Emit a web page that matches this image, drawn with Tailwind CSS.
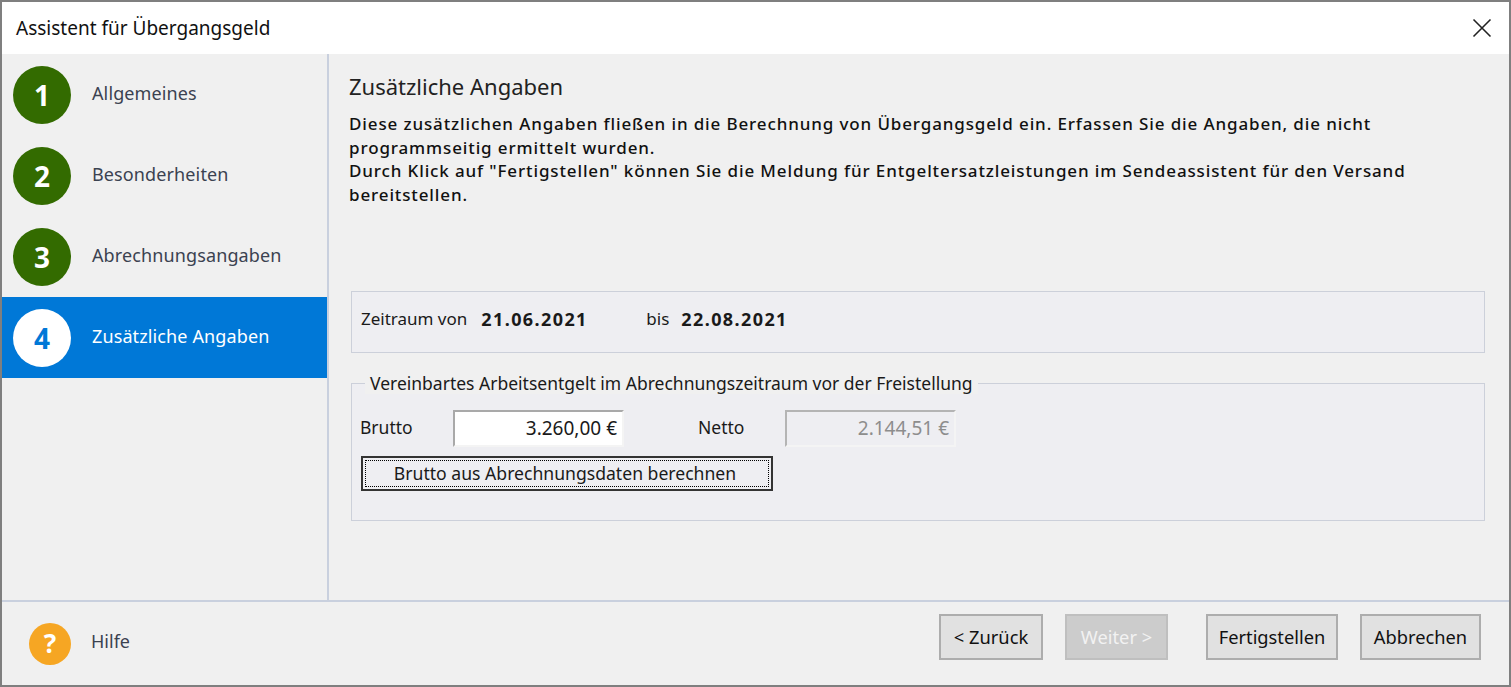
<!DOCTYPE html>
<html lang="de">
<head>
  <meta charset="UTF-8">
  <title>Assistent für Übergangsgeld</title>
  <script src="https://cdn.jsdelivr.net/npm/@tailwindcss/browser@4"></script>
</head>
<body class="bg-[#f0f0f0] overflow-hidden">
  <div class="w-[1511px] h-[687px] flex flex-col border-2 border-[#7f7f7f] bg-[#f0f0f0] font-['Noto_Sans',sans-serif] text-[#1a1a1a]">

    <!-- Title bar -->
    <div class="h-[52px] shrink-0 bg-white flex items-center justify-between pl-[14px] pr-[17px]">
      <span class="text-[19px] text-[#111]">Assistent für Übergangsgeld</span>
      <svg width="20" height="20" viewBox="0 0 20 20" fill="none" stroke="#222" stroke-width="1.6"><path d="M1.5 1.5 18.5 18.5M18.5 1.5 1.5 18.5"/></svg>
    </div>

    <!-- Main -->
    <div class="flex flex-1 min-h-0">
      <!-- Steps -->
      <nav class="w-[325px] shrink-0 text-[#3b4250] text-[18px] tracking-[0.12px]">
        <div class="h-[81px] flex items-center pl-[11px] gap-[21px]">
          <span class="w-[58px] h-[58px] rounded-full bg-[#336b00] text-white flex items-center justify-center text-[28px] font-bold">1</span>
          <span class="mb-[2px]">Allgemeines</span>
        </div>
        <div class="h-[81px] flex items-center pl-[11px] gap-[21px]">
          <span class="w-[58px] h-[58px] rounded-full bg-[#336b00] text-white flex items-center justify-center text-[28px] font-bold">2</span>
          <span class="mb-[2px]">Besonderheiten</span>
        </div>
        <div class="h-[81px] flex items-center pl-[11px] gap-[21px]">
          <span class="w-[58px] h-[58px] rounded-full bg-[#336b00] text-white flex items-center justify-center text-[28px] font-bold">3</span>
          <span class="mb-[2px]">Abrechnungsangaben</span>
        </div>
        <div class="h-[81px] flex items-center pl-[11px] gap-[21px] bg-[#0078d7] text-white">
          <span class="w-[58px] h-[58px] rounded-full bg-white text-[#0078d7] flex items-center justify-center text-[28px] font-bold">4</span>
          <span class="mb-[2px]">Zusätzliche Angaben</span>
        </div>
      </nav>

      <!-- Content -->
      <main class="flex-1 border-l-2 border-[#c9d0de] pl-[20px] pr-[24px] pt-[18px]">
        <h1 class="text-[22px] leading-[28px] text-[#222]">Zusätzliche Angaben</h1>
        <p class="mt-[12px] text-[17px] leading-[23.5px] tracking-[0.87px] text-[#111] h-[179px] font-medium">
          Diese zusätzlichen Angaben fließen in die Berechnung von Übergangsgeld ein. Erfassen Sie die Angaben, die nicht<br>
          programmseitig ermittelt wurden.<br>
          Durch Klick auf "Fertigstellen" können Sie die Meldung für Entgeltersatzleistungen im Sendeassistent für den Versand<br>
          bereitstellen.
        </p>

        <div class="ml-[2px] h-[62px] border border-[#ccd0da] bg-[#eeeef2] flex items-center pl-[9px] pb-[6px] text-[17px]">
          <span>Zeitraum von</span>
          <strong class="ml-[14px] w-[165px] text-[18px] tracking-[1.4px] font-bold">21.06.2021</strong>
          <span>bis</span>
          <strong class="ml-[12px] text-[18px] tracking-[1.4px] font-bold">22.08.2021</strong>
        </div>

        <fieldset class="ml-[2px] mt-[19px] h-[149px] border border-[#ccd0da] bg-[#eeeef2] pl-[8px]">
          <legend class="ml-[5px] px-[5px] text-[17.5px] leading-[22px] bg-[#f0f0f0]">Vereinbartes Arbeitsentgelt im Abrechnungszeitraum vor der Freistellung</legend>
          <div class="flex items-center mt-[16px] text-[17.5px]">
            <span class="w-[93px] -mt-[2px]">Brutto</span>
            <div class="w-[171px] h-[37px] bg-white border-2 border-[#a9a9a9] border-r-[#f4f4f4] border-b-[#f4f4f4] flex items-center justify-end pr-[5px] text-[19px]">3.260,00 €</div>
            <span class="ml-[74px] w-[87px] -mt-[2px]">Netto</span>
            <div class="w-[171px] h-[37px] bg-[#eeeef2] border-2 border-[#b4b4b4] border-r-[#f4f4f4] border-b-[#f4f4f4] flex items-center justify-end pr-[5px] text-[19px] text-[#8d8d8d]">2.144,51 €</div>
          </div>
          <button class="block ml-px mt-[9px] w-[412px] h-[35px] bg-[#eeeef2] border-2 border-[#333] p-[2px] text-[17.6px] leading-none">
            <span class="flex items-center justify-center w-full h-full border border-dotted border-black pr-[4px] pt-px">Brutto aus Abrechnungsdaten berechnen</span>
          </button>
        </fieldset>
      </main>
    </div>

    <!-- Footer -->
    <footer class="h-[85px] shrink-0 border-t-2 border-[#c9d0de] flex items-center pl-[27px] pr-[28px] text-[18.3px]">
      <span class="w-[42px] h-[42px] rounded-full bg-[#f6a623] text-white flex items-center justify-center text-[26px] font-bold">?</span>
      <span class="ml-[20px] mb-[4px] text-[#3b4250] text-[18px]">Hilfe</span>
      <div class="ml-auto mb-[14px] flex items-center">
        <button class="w-[104px] h-[46px] bg-[#e1e1e1] border-2 border-[#adadad] text-[#111]">&lt; Zurück</button>
        <button class="ml-[22px] w-[103px] h-[46px] bg-[#cccccc] border-2 border-[#bfbfbf] text-[#f2f2f2]">Weiter &gt;</button>
        <button class="ml-[38px] w-[132px] h-[46px] bg-[#e1e1e1] border-2 border-[#adadad] text-[#111]">Fertigstellen</button>
        <button class="ml-[22px] w-[121px] h-[46px] bg-[#e1e1e1] border-2 border-[#adadad] text-[#111]">Abbrechen</button>
      </div>
    </footer>
  </div>
</body>
</html>
